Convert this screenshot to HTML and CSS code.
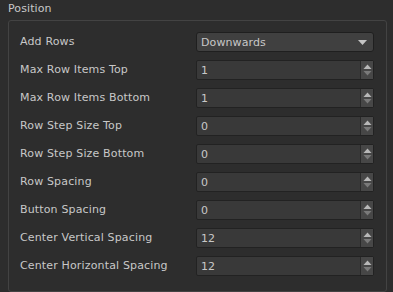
FILE: index.html
```html
<!DOCTYPE html>
<html>
<head>
<meta charset="utf-8">
<link rel="stylesheet" href="styles.css">
</head>
<body>
<div class="title">Position</div>
<div class="group">
  <div class="row">
    <span class="label">Add Rows</span>
    <div class="combo"><span>Downwards</span><svg class="drop" width="9" height="5" viewBox="0 0 9 5"><path d="M0 0H9L4.5 5Z" fill="#c4c4c4"/></svg></div>
  </div>
  <div class="row"><span class="label">Max Row Items Top</span><div class="spin"><span class="val">1</span><div class="btns"><svg width="9" height="14" viewBox="0 0 9 14"><path d="M0.5 6L4.5 1.5L8.5 6Z" fill="#b8b8b8"/><path d="M0.5 8L8.5 8L4.5 12.5Z" fill="#7a7a7a"/></svg></div></div></div>
  <div class="row"><span class="label">Max Row Items Bottom</span><div class="spin"><span class="val">1</span><div class="btns"><svg width="9" height="14" viewBox="0 0 9 14"><path d="M0.5 6L4.5 1.5L8.5 6Z" fill="#b8b8b8"/><path d="M0.5 8L8.5 8L4.5 12.5Z" fill="#7a7a7a"/></svg></div></div></div>
  <div class="row"><span class="label">Row Step Size Top</span><div class="spin"><span class="val">0</span><div class="btns"><svg width="9" height="14" viewBox="0 0 9 14"><path d="M0.5 6L4.5 1.5L8.5 6Z" fill="#b8b8b8"/><path d="M0.5 8L8.5 8L4.5 12.5Z" fill="#7a7a7a"/></svg></div></div></div>
  <div class="row"><span class="label">Row Step Size Bottom</span><div class="spin"><span class="val">0</span><div class="btns"><svg width="9" height="14" viewBox="0 0 9 14"><path d="M0.5 6L4.5 1.5L8.5 6Z" fill="#b8b8b8"/><path d="M0.5 8L8.5 8L4.5 12.5Z" fill="#7a7a7a"/></svg></div></div></div>
  <div class="row"><span class="label">Row Spacing</span><div class="spin"><span class="val">0</span><div class="btns"><svg width="9" height="14" viewBox="0 0 9 14"><path d="M0.5 6L4.5 1.5L8.5 6Z" fill="#b8b8b8"/><path d="M0.5 8L8.5 8L4.5 12.5Z" fill="#7a7a7a"/></svg></div></div></div>
  <div class="row"><span class="label">Button Spacing</span><div class="spin"><span class="val">0</span><div class="btns"><svg width="9" height="14" viewBox="0 0 9 14"><path d="M0.5 6L4.5 1.5L8.5 6Z" fill="#b8b8b8"/><path d="M0.5 8L8.5 8L4.5 12.5Z" fill="#7a7a7a"/></svg></div></div></div>
  <div class="row"><span class="label">Center Vertical Spacing</span><div class="spin"><span class="val">12</span><div class="btns"><svg width="9" height="14" viewBox="0 0 9 14"><path d="M0.5 6L4.5 1.5L8.5 6Z" fill="#b8b8b8"/><path d="M0.5 8L8.5 8L4.5 12.5Z" fill="#7a7a7a"/></svg></div></div></div>
  <div class="row"><span class="label">Center Horizontal Spacing</span><div class="spin"><span class="val">12</span><div class="btns"><svg width="9" height="14" viewBox="0 0 9 14"><path d="M0.5 6L4.5 1.5L8.5 6Z" fill="#b8b8b8"/><path d="M0.5 8L8.5 8L4.5 12.5Z" fill="#7a7a7a"/></svg></div></div></div>
</div>
</body>
</html>
```
FILE: styles.css
```css
html, body {
  margin: 0;
  padding: 0;
  background: #2d2d2d;
  width: 393px;
  height: 292px;
  overflow: hidden;
  font-family: "DejaVu Sans", Verdana, sans-serif;
  font-size: 11px;
  color: #c8c8c8;
}
.title {
  height: 19px;
  line-height: 18px;
  padding-left: 8px;
  letter-spacing: 0.1px;
}
.group {
  margin: 1px 6px 0 8px;
  height: 263px;
  border: 1px solid #434343;
  border-radius: 3px;
  padding: 7px 11px 0 11px;
}
.row {
  display: grid;
  grid-template-columns: 176px 178px;
  align-items: center;
  height: 28px;
}
.label {
  line-height: 14px;
  letter-spacing: 0.15px;
}
.combo {
  height: 18px;
  border: 1px solid #1f1f1f;
  border-radius: 3px;
  background: #404040;
  display: flex;
  align-items: center;
  justify-content: space-between;
  padding: 0 6px 0 4px;
  letter-spacing: 0.1px;
}
.drop {
  display: block;
}
.spin {
  height: 18px;
  border: 1px solid #222;
  border-radius: 2px;
  background: #393939;
  display: flex;
  align-items: center;
  justify-content: space-between;
}
.val {
  padding-left: 4px;
}
.btns {
  width: 12px;
  height: 18px;
  border-left: 1px solid #2a2a2a;
  background: #474747;
  display: flex;
  align-items: center;
  justify-content: center;
}
.btns svg {
  display: block;
}
```
